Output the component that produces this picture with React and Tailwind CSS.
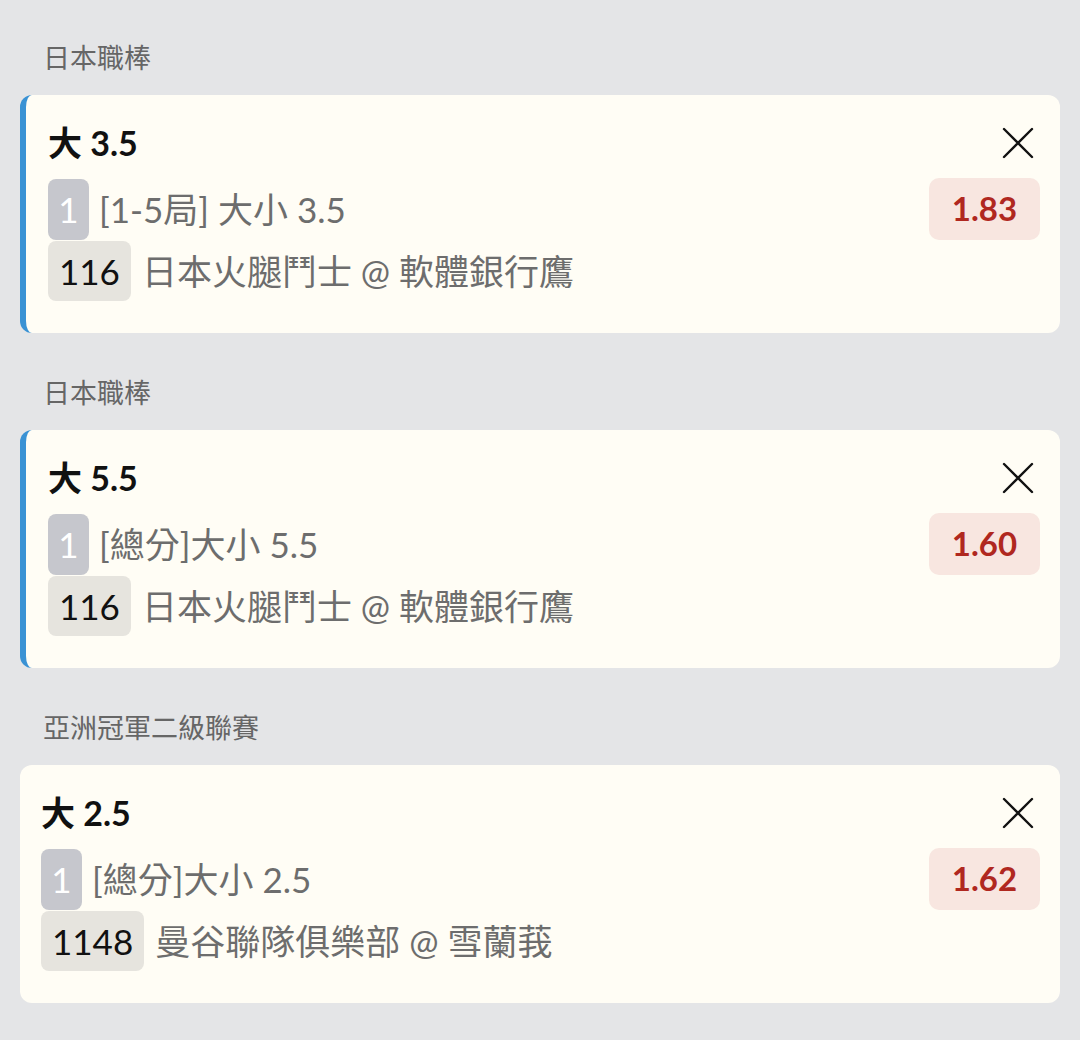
import React from "react";

const bets = [
  {
    league: "日本職棒",
    title: "大 3.5",
    market: "[1-5局] 大小 3.5",
    code: "116",
    match: "日本火腿鬥士 @ 軟體銀行鷹",
    odds: "1.83",
    active: true,
  },
  {
    league: "日本職棒",
    title: "大 5.5",
    market: "[總分]大小 5.5",
    code: "116",
    match: "日本火腿鬥士 @ 軟體銀行鷹",
    odds: "1.60",
    active: true,
  },
  {
    league: "亞洲冠軍二級聯賽",
    title: "大 2.5",
    market: "[總分]大小 2.5",
    code: "1148",
    match: "曼谷聯隊俱樂部 @ 雪蘭莪",
    odds: "1.62",
    active: false,
  },
];

const CloseIcon = () => (
  <svg width="32" height="32" viewBox="0 0 32 32" fill="none">
    <path d="M2 2L30 30M30 2L2 30" stroke="#111" strokeWidth="2.4" strokeLinecap="round" />
  </svg>
);

const BetCard = ({ bet }) => (
  <div
    className={`rounded-[12px] bg-[#fffdf5] pr-[20px] pt-[28px] pb-[32px] ${
      bet.active ? "border-l-[6px] border-l-[#3a92d4] pl-[22px]" : "pl-[21px]"
    }`}
  >
    <div className="flex h-[40px] items-center justify-between">
      <span className="text-[34px] font-bold leading-[40px] text-[#111]">{bet.title}</span>
      <span className="mr-[6px]">
        <CloseIcon />
      </span>
    </div>
    <div className="mt-[15px] flex items-center justify-between">
      <div className="flex items-center">
        <span className="flex h-[61px] w-[41px] items-center justify-center rounded-[8px] bg-[#c6c7cd] text-[35px] text-white">
          1
        </span>
        <span className="ml-[10px] text-[35px] leading-[44px] text-[#6d6d6d]">{bet.market}</span>
      </div>
      <span className="flex h-[62px] w-[111px] items-center justify-center rounded-[10px] bg-[#f8e6e0] text-[33px] font-bold text-[#b0281f]">
        {bet.odds}
      </span>
    </div>
    <div className="mt-px flex items-center">
      <span className="flex h-[60px] items-center rounded-[8px] bg-[#e6e4de] px-[11px] text-[35px] text-[#111]">
        {bet.code}
      </span>
      <span className="ml-[11px] text-[35px] leading-[44px] text-[#6d6d6d]">{bet.match}</span>
    </div>
  </div>
);

export default function App() {
  return (
    <div
      className="min-h-screen bg-[#e4e5e7] px-[20px] pt-[42px] pb-[40px]"
      style={{ fontFamily: "Lato, 'Noto Sans CJK TC', sans-serif" }}
    >
      {bets.map((bet, i) => (
        <div key={i} className={i > 0 ? "mt-[44px]" : ""}>
          <div className="pl-[23px] text-[27px] leading-[32px] text-[#666]">{bet.league}</div>
          <div className="mt-[21px]">
            <BetCard bet={bet} />
          </div>
        </div>
      ))}
    </div>
  );
}
